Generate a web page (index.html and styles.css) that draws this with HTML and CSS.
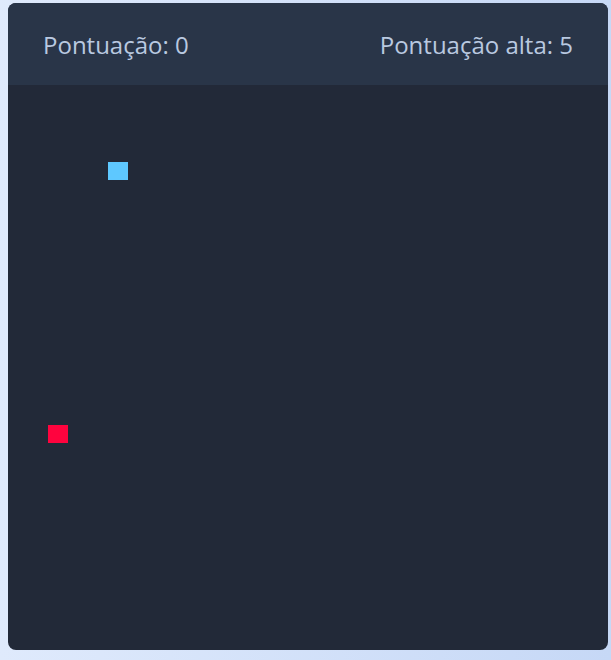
FILE: index.html
```html
<!DOCTYPE html>
<html lang="pt">
<head>
<meta charset="utf-8">
<link rel="stylesheet" href="styles.css">
</head>
<body>
<div class="card">
  <div class="header">
    <span class="score">Pontuação: 0</span>
    <span class="score">Pontuação alta: 5</span>
  </div>
  <div class="board">
    <div class="cell snake" style="left:100px; top:77px;"></div>
    <div class="cell food" style="left:40px; top:340px;"></div>
  </div>
</div>
</body>
</html>
```

FILE: styles.css
```css
html, body {
  margin: 0;
  padding: 0;
}
body {
  width: 611px;
  height: 660px;
  background: linear-gradient(90deg, #dfeafc 0%, #c6d8f6 100%);
  font-family: "Open Sans", "Noto Sans", sans-serif;
  padding-top: 3px;
  padding-left: 8px;
  box-sizing: border-box;
}
.card {
  width: 600px;
  height: 647px;
  border-radius: 8px;
  overflow: hidden;
  background: #222938;
  display: flex;
  flex-direction: column;
}
.header {
  height: 82px;
  background: #293548;
  display: flex;
  justify-content: space-between;
  align-items: center;
  padding: 0 35px;
}
.score {
  color: #b9c9e0;
  font-size: 24px;
}
.board {
  position: relative;
  flex: 1;
}
.cell {
  position: absolute;
  width: 20px;
  height: 18px;
}
.snake { background: #5ec8ff; }
.food { background: #ff033e; }
```
